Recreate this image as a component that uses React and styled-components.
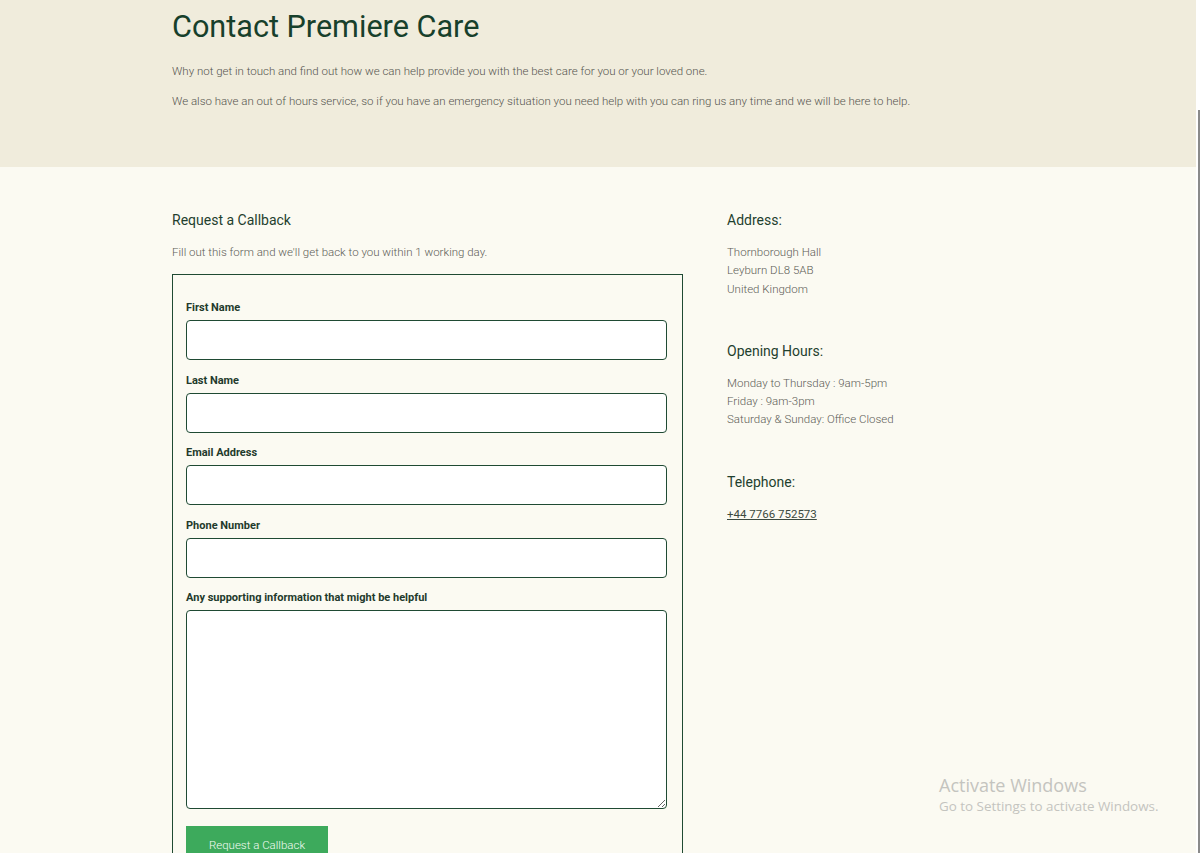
import React from 'react';
import styled, { createGlobalStyle } from 'styled-components';

const GlobalStyle = createGlobalStyle`
	html, body {
		margin: 0;
		padding: 0;
		height: 853px;
		overflow: hidden;
		background: #fbfaf2;
	}
	body {
		font-family: Roboto, "Liberation Sans", sans-serif;
	}
	* {
		box-sizing: border-box;
	}
`;

const fields = [
	{ id: 'first', label: 'First Name' },
	{ id: 'last', label: 'Last Name' },
	{ id: 'email', label: 'Email Address' },
	{ id: 'phone', label: 'Phone Number' },
];

const App = () => (
	<Page>
		<GlobalStyle />
		<Main>
			<Hero>
				<Container>
					<Heading>Contact Premiere Care</Heading>
					<Lead>
						Why not get in touch and find out how we can help provide you with the best care for you or your loved one.
					</Lead>
					<Lead>
						We also have an out of hours service, so if you have an emergency situation you need help with you can ring us any
						time and we will be here to help.
					</Lead>
				</Container>
			</Hero>
			<Section>
				<Container>
					<Columns>
						<FormColumn>
							<Title>Request a Callback</Title>
							<Text>Fill out this form and we'll get back to you within 1 working day.</Text>
							<FormBox>
								{fields.map((f) => (
									<Field key={f.id}>
										<Label htmlFor={f.id}>{f.label}</Label>
										<Input id={f.id} type="text" />
									</Field>
								))}
								<Field>
									<Label htmlFor="info">Any supporting information that might be helpful</Label>
									<Textarea id="info" />
								</Field>
								<SubmitBtn type="button">Request a Callback</SubmitBtn>
							</FormBox>
						</FormColumn>
						<InfoColumn>
							<InfoBlock>
								<Title>Address:</Title>
								<Lines>
									<span>Thornborough Hall</span>
									<span>Leyburn DL8 5AB</span>
									<span>United Kingdom</span>
								</Lines>
							</InfoBlock>
							<InfoBlock>
								<Title>Opening Hours:</Title>
								<Lines>
									<span>Monday to Thursday : 9am-5pm</span>
									<span>Friday : 9am-3pm</span>
									<span>Saturday &amp; Sunday: Office Closed</span>
								</Lines>
							</InfoBlock>
							<InfoBlock>
								<Title>Telephone:</Title>
								<Lines>
									<Phone href="#">+44 7766 752573</Phone>
								</Lines>
							</InfoBlock>
						</InfoColumn>
					</Columns>
				</Container>
			</Section>
		</Main>
		<Scrollbar>
			<Thumb />
		</Scrollbar>
		<Watermark>
			<WatermarkTitle>Activate Windows</WatermarkTitle>
			<WatermarkText>Go to Settings to activate Windows.</WatermarkText>
		</Watermark>
	</Page>
);

export default App;

const Page = styled.div`
	display: flex;
	width: 1200px;
	height: 853px;
	overflow: hidden;
	position: relative;
`;

const Main = styled.div`
	flex: 1;
	display: flex;
	flex-direction: column;
	min-height: 0;
`;

const Scrollbar = styled.div`
	width: 4px;
	background: #ffffff;
	display: flex;
	flex-direction: column;
	align-items: flex-end;
	padding-top: 110px;
`;

const Thumb = styled.div`
	width: 2px;
	flex: 1;
	background: #8a8a8a;
`;

const Hero = styled.section`
	flex-shrink: 0;
	background: #f0ecdc;
	height: 167px;
	padding-top: 8px;
`;

const Section = styled.section`
	flex-shrink: 0;
	background: #fbfaf2;
	padding-top: 44px;
`;

const Container = styled.div`
	padding-left: 172px;
	padding-right: 40px;
`;

const Heading = styled.h1`
	margin: 0 0 18px;
	font-size: 30.6px;
	line-height: 38px;
	font-weight: 400;
	color: #17402b;
`;

const Lead = styled.p`
	margin: 0 0 16px;
	font-size: 11.5px;
	line-height: 14px;
	font-weight: 300;
	color: #55554f;
`;

const Columns = styled.div`
	display: flex;
	gap: 44px;
`;

const FormColumn = styled.div`
	width: 511px;
	display: flex;
	flex-direction: column;
`;

const InfoColumn = styled.div`
	display: flex;
	flex-direction: column;
	gap: 44px;
`;

const InfoBlock = styled.div`
	display: flex;
	flex-direction: column;
`;

const Title = styled.h3`
	margin: 0 0 14px;
	font-size: 14px;
	line-height: 18px;
	font-weight: 400;
	color: #1f3f2e;
`;

const Text = styled.p`
	margin: 0 0 13px;
	font-size: 11.5px;
	line-height: 18px;
	font-weight: 300;
	color: #5d5d57;
`;

const Lines = styled.div`
	display: flex;
	flex-direction: column;
	font-size: 11.5px;
	line-height: 18.3px;
	font-weight: 300;
	color: #5d5d57;
`;

const Phone = styled.a`
	color: #3c4a40;
	font-weight: 400;
	text-decoration: underline;
`;

const FormBox = styled.div`
	border: 1px solid #1f4a33;
	padding: 26px 15px 0 13px;
	height: 600px;
	display: flex;
	flex-direction: column;
`;

const Field = styled.div`
	display: flex;
	flex-direction: column;
	margin-bottom: 13.5px;
`;

const Label = styled.label`
	font-size: 11px;
	line-height: 13px;
	font-weight: 700;
	color: #1f3a2c;
	margin-bottom: 6px;
`;

const Input = styled.input`
	height: 40px;
	width: 100%;
	border: 1px solid #1f4a33;
	border-radius: 4px;
	background: #ffffff;
	outline: none;
	font-family: inherit;
`;

const Textarea = styled.textarea`
	height: 199px;
	width: 100%;
	border: 1px solid #1f4a33;
	border-radius: 4px;
	background: #ffffff;
	outline: none;
	font-family: inherit;
	resize: vertical;
`;

const SubmitBtn = styled.button`
	align-self: flex-start;
	margin-top: 3px;
	width: 142px;
	height: 38px;
	border: none;
	border-radius: 0;
	background: #3daa5c;
	color: #f2fbf3;
	font-family: Roboto, "Liberation Sans", sans-serif;
	font-size: 11.5px;
	font-weight: 300;
	padding: 0;
`;

const Watermark = styled.div`
	position: absolute;
	left: 939px;
	top: 773px;
	display: flex;
	flex-direction: column;
	pointer-events: none;
	font-family: "Open Sans", "Noto Sans", sans-serif;
	color: #c4c4bf;
`;

const WatermarkTitle = styled.div`
	font-size: 18px;
	line-height: 24px;
`;

const WatermarkText = styled.div`
	font-size: 13.4px;
	line-height: 18px;
`;
